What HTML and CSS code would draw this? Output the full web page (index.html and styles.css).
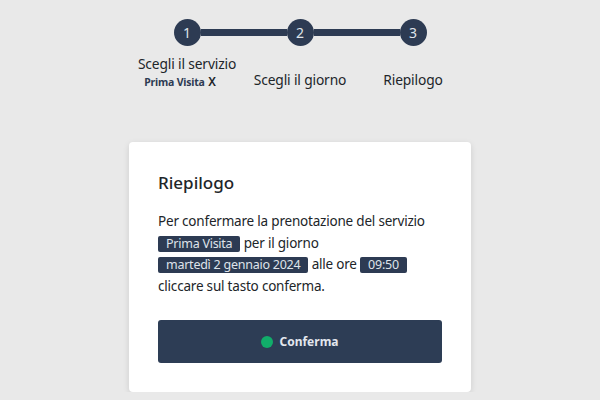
FILE: index.html
```html
<!DOCTYPE html>
<html lang="it">
<head>
<meta charset="utf-8">
<title>Riepilogo</title>
<link rel="stylesheet" href="styles.css">
</head>
<body>
<div class="stepper">
  <div class="step first">
    <div class="track"><span class="bar"></span><span class="dot">1</span><span class="bar"></span></div>
    <div class="label">Scegli il servizio</div>
    <div class="sub">Prima Visita <span class="x">X</span></div>
  </div>
  <div class="step">
    <div class="track"><span class="bar"></span><span class="dot">2</span><span class="bar"></span></div>
    <div class="label">Scegli il giorno</div>
  </div>
  <div class="step last">
    <div class="track"><span class="bar"></span><span class="dot">3</span><span class="bar"></span></div>
    <div class="label">Riepilogo</div>
  </div>
</div>

<div class="card">
  <h2 class="title">Riepilogo</h2>
  <p class="text">Per confermare la prenotazione del servizio <span class="tag">Prima Visita</span> per il giorno <span class="tag">martedì 2 gennaio 2024</span> alle ore <span class="tag">09:50</span> cliccare sul tasto conferma.</p>
  <button class="confirm"><span class="green"></span>Conferma</button>
</div>
</body>
</html>
```
FILE: styles.css
```css
* { box-sizing: border-box; }
body {
  margin: 0;
  background: #e9e9e9;
  font-family: "Noto Sans", "Open Sans", sans-serif;
  color: #212529;
}
.stepper {
  display: grid;
  grid-template-columns: repeat(3, 113px);
  justify-content: center;
  align-items: end;
  margin-top: 19px;
}
.step {
  display: flex;
  flex-direction: column;
  align-items: center;
  height: 70px;
}
.track {
  display: flex;
  align-items: center;
  width: 100%;
  height: 27px;
}
.bar {
  flex: 1;
  height: 7px;
  background: #2d3b53;
}
.first .bar:first-child, .last .bar:last-child { background: transparent; }
.dot {
  width: 27px;
  height: 27px;
  border-radius: 50%;
  background: #2d3b53;
  color: #dfe3ea;
  font-size: 14px;
  display: flex;
  align-items: center;
  justify-content: center;
  flex: none;
}
.label {
  font-size: 13.8px;
  letter-spacing: -0.15px;
  line-height: 19px;
  margin-top: auto;
  white-space: nowrap;
}
.first .label { margin-top: 8px; }
.sub {
  font-size: 10.5px;
  font-weight: 700;
  color: #2d3b53;
  letter-spacing: -0.2px;
  line-height: 16px;
  margin-right: 14px;
  margin-top: 1px;
}
.sub .x { font-weight: 600; font-size: 12px; color: #212529; margin-left: 1px; }
.card {
  width: 342px;
  margin: 53px auto 0;
  background: #fff;
  border-radius: 4px;
  box-shadow: 0 2px 6px rgba(0,0,0,0.12);
  padding: 28px 29px 29px;
}
.title {
  font-size: 17px;
  font-weight: 500;
  margin: 0 0 15px;
  line-height: 26px;
}
.text {
  font-size: 13.5px;
  letter-spacing: -0.2px;
  line-height: 21.6px;
  margin: 0 0 23px;
}
.tag {
  display: inline-block;
  white-space: nowrap;
  background: #2d3b53;
  color: #dfe3ea;
  font-size: 12.5px;
  letter-spacing: -0.25px;
  line-height: 16px;
  padding: 0 8px;
  border-radius: 2px;
}
.confirm {
  width: 100%;
  height: 43px;
  border: none;
  border-radius: 3px;
  background: #2d3d55;
  color: #e3e7ee;
  font-family: inherit;
  font-size: 12px;
  font-weight: 700;
  display: flex;
  align-items: center;
  justify-content: center;
  gap: 6px;
}
.green {
  width: 12px;
  height: 12px;
  border-radius: 50%;
  background: #11ad6a;
}
```
